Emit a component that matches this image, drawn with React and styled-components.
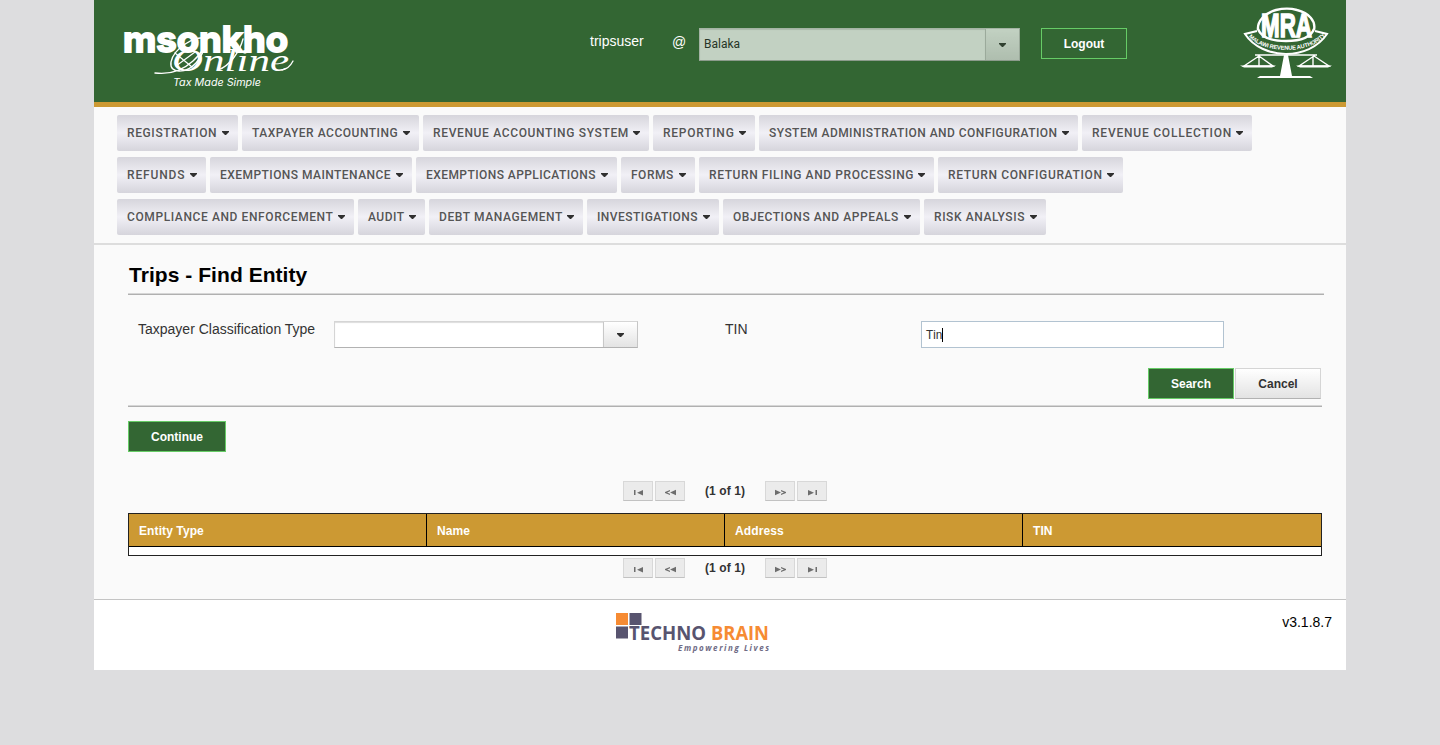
import React from "react";
import styled, { createGlobalStyle } from "styled-components";

const GlobalStyle = createGlobalStyle`
  * { box-sizing: border-box; }
  body { margin: 0; background: #dddddf; color: #000; font-family: "Liberation Sans", Arial, sans-serif; }
`;

const Page = styled.div`
  width: 1252px;
  height: 670px;
  margin: 0 auto;
  display: flex;
  flex-direction: column;
  background: #fafafa;
`;

const Header = styled.header`
  height: 107px;
  flex: none;
  display: flex;
  align-items: flex-start;
  background: #336633;
  border-bottom: 5px solid #cc9933;
  color: #fff;
  font-size: 14px;
`;

const BrandLogo = styled.svg`
  display: block;
  width: 180px;
  height: 72px;
  margin: 20px 0 0 26px;
`;

const UserName = styled.span`
  width: 82px;
  margin: 33px 0 0 290px;
  line-height: 16px;
`;

const At = styled.span`
  width: 27px;
  margin-top: 34px;
  line-height: 16px;
`;

const Select = styled.div`
  width: ${(p) => p.$width}px;
  height: ${(p) => p.$height}px;
  display: flex;
  border: 1px solid #d5d5d5;
  border-bottom-color: #b2b2b2;
  border-right-color: #c6c6c6;
  background: #fff;
  color: #222;
  font: 12px Roboto, sans-serif;
  opacity: ${(p) => (p.$disabled ? 0.7 : 1)};
`;

const SelectValue = styled.div`
  flex: 1;
  display: flex;
  align-items: center;
  padding: 0 0 2px 4px;
  box-shadow: inset 0 1px 1px #ddd;
`;

const SelectTrigger = styled.div`
  width: 34px;
  display: flex;
  align-items: center;
  justify-content: center;
  border-left: 1px solid #c8c8c8;
  background: linear-gradient(#fff, #e3e3e3);
`;

const CaretIcon = styled.svg`
  display: block;
  flex: none;
  width: 7px;
  height: 4px;
  fill: #303030;
`;

const Button = styled.button`
  width: ${(p) => p.$width || 86}px;
  height: 31px;
  padding: 0;
  border: 1px solid ${(p) => (p.$primary ? "#66cc66" : "#d5d5d5")};
  border-bottom-color: ${(p) => (p.$primary ? "#66cc66" : "#b2b2b2")};
  background: ${(p) => (p.$primary ? "#336633" : "linear-gradient(#fff, #e3e3e3)")};
  color: ${(p) => (p.$primary ? "#fff" : "#333")};
  font: bold 12px "Liberation Sans", Arial, sans-serif;
`;

const LogoutSlot = styled.div`
  margin: 28px 0 0 21px;
`;

const OfficeSlot = styled.div`
  margin-top: 28px;
`;

const AuthorityLogo = styled.svg`
  display: block;
  width: 94px;
  height: 76px;
  margin: 5px 13px 0 auto;
`;

const Nav = styled.nav`
  height: 138px;
  flex: none;
  display: flex;
  flex-direction: column;
  gap: 6px;
  padding: 8px 0 0 23px;
  border-bottom: 2px solid #dddddd;
`;

const NavRow = styled.div`
  display: flex;
  gap: 4px;
`;

const NavItem = styled.div`
  width: ${(p) => p.$width}px;
  height: 36px;
  display: flex;
  align-items: center;
  justify-content: space-between;
  padding: 0 9px 0 10px;
  border-radius: 2px;
  background: linear-gradient(#d6d5dc, #f1f0f6 50%, #d6d5dc);
  color: #555;
  font: 500 12px Roboto, sans-serif;
  letter-spacing: ${(p) => p.$tracking}px;
  white-space: nowrap;
`;

const Content = styled.main`
  height: 354px;
  flex: none;
  padding: 0 24px 0 34px;
`;

const Title = styled.h1`
  width: 1196px;
  height: 50px;
  margin: 0;
  padding: 17px 0 0 1px;
  border-bottom: 1px solid #b0b0b0;
  box-shadow: inset 0 -1px #d6d6d6;
  font-size: 21px;
  line-height: 26px;
  letter-spacing: 0.05px;
`;

const Form = styled.div`
  display: flex;
  height: 27px;
  margin-top: 26px;
  padding-left: 10px;
  color: #333;
  font-size: 14px;
`;

const Label = styled.label`
  width: 196px;
  line-height: 17px;
  margin-left: ${(p) => p.$offset || 0}px;
`;

const TextInput = styled.div`
  width: 303px;
  height: 27px;
  display: flex;
  align-items: center;
  padding-left: 4px;
  border: 1px solid #b2c3d1;
  background: #fff;
  font: 12px Roboto, sans-serif;
  letter-spacing: -0.2px;
`;

const TextCursor = styled.i`
  width: 1px;
  height: 14px;
  background: #000;
`;

const Actions = styled.div`
  width: 1194px;
  height: 59px;
  display: flex;
  justify-content: flex-end;
  gap: 1px;
  padding: 20px 1px 0 0;
  border-bottom: 1px solid #b0b0b0;
  box-shadow: inset 0 -1px #d6d6d6;
`;

const ContinueRow = styled.div`
  height: 74px;
  padding-top: 14px;
`;

const Paginator = styled.div`
  width: 204px;
  height: 20px;
  display: flex;
  gap: 2px;
  margin-left: 495px;
`;

const PageButton = styled.div`
  width: 30px;
  height: 20px;
  display: flex;
  align-items: center;
  justify-content: center;
  padding-top: 3px;
  border: 1px solid #d8d8d8;
  border-bottom-color: #c2c2c2;
  background: #ebebeb;
`;

const PageIcon = styled.svg`
  display: block;
  width: 11px;
  height: 7px;
  fill: #6d6d6d;
  stroke: none;
`;

const PageStatus = styled.span`
  width: 76px;
  text-align: center;
  color: #333;
  font-size: 12px;
  font-weight: bold;
  line-height: 20px;
  letter-spacing: 0.1px;
`;

const Table = styled.div`
  width: 1194px;
  height: 43px;
  margin: 12px 0 2px;
  border: 1px solid #222;
  background: #fff;
`;

const TableHead = styled.div`
  height: 33px;
  display: grid;
  grid-template-columns: 298px 298px 298px 298px;
  grid-template-rows: 32px;
  background: #cc9933;
  border-bottom: 1px solid #000;
`;

const HeadCell = styled.div`
  padding-left: 10px;
  border-right: ${(p) => (p.$last ? "none" : "1px solid #000")};
  color: #fff;
  font-size: 12px;
  font-weight: bold;
  line-height: 34px;
  letter-spacing: 0.1px;
`;

const Footer = styled.footer`
  height: 71px;
  flex: none;
  display: flex;
  justify-content: space-between;
  padding: 13px 14px 0 521px;
  border-top: 1px solid #c4c4c4;
  background: #fff;
`;

const VendorLogo = styled.svg`
  display: block;
  width: 156px;
  height: 44px;
`;

const Version = styled.span`
  font-size: 14px;
  line-height: 18px;
`;

const menus = [
  [["REGISTRATION", 121, 0.62], ["TAXPAYER ACCOUNTING", 177, 0.52], ["REVENUE ACCOUNTING SYSTEM", 226, 0.65], ["REPORTING", 102, 0.75], ["SYSTEM ADMINISTRATION AND CONFIGURATION", 319, 0.45], ["REVENUE COLLECTION", 170, 0.78]],
  [["REFUNDS", 89, 0.85], ["EXEMPTIONS MAINTENANCE", 202, 0.45], ["EXEMPTIONS APPLICATIONS", 201, 0.43], ["FORMS", 74, 0.5], ["RETURN FILING AND PROCESSING", 235, 0.6], ["RETURN CONFIGURATION", 185, 0.65]],
  [["COMPLIANCE AND ENFORCEMENT", 237, 0.6], ["AUDIT", 67, 0.5], ["DEBT MANAGEMENT", 154, 0.6], ["INVESTIGATIONS", 132, 0.46], ["OBJECTIONS AND APPEALS", 197, 0.55], ["RISK ANALYSIS", 122, 0.58]],
];

const columns = ["Entity Type", "Name", "Address", "TIN"];

const pageIcons = {
  first: "M1 1h1.500v5H1z M10 1v5.500L4 3.700z",
  prev: "M5 1v1.300L2 3.500 5 4.700V6L0 4V3z M11 .7v5.600L5 3.500z",
  next: "M0 .7v5.600l6-2.800z M6 1v1.300l3 1.200-3 1.200V6l5-2V3z",
  last: "M1 1v5.500l6-2.800z M8.500 1H10v5H8.500z",
};

function Caret() {
  return (
    <CaretIcon viewBox="0 0 7 4"><path d="M0 0h7v1L4 4H3L0 1z" /></CaretIcon>
  );
}

function PageLink({ kind }) {
  return (
    <PageButton><PageIcon viewBox="0 0 11 7"><path d={pageIcons[kind]} /></PageIcon></PageButton>
  );
}

function Pager() {
  return (
    <Paginator>
      <PageLink kind="first" />
      <PageLink kind="prev" />
      <PageStatus>(1 of 1)</PageStatus>
      <PageLink kind="next" />
      <PageLink kind="last" />
    </Paginator>
  );
}

function Brand() {
  return (
    <BrandLogo viewBox="120 20 180 72" fill="#fff">
      <text x="123" y="51.5" fontFamily="Inter, sans-serif" fontWeight="700" fontSize="35" textLength="165" lengthAdjust="spacingAndGlyphs" stroke="#fff" strokeWidth="1.8">msonkho</text>
      <text x="172" y="71" fontFamily="Liberation Serif, serif" fontStyle="italic" fontSize="31" textLength="117" lengthAdjust="spacingAndGlyphs">Online</text>
      <g fill="none" stroke="#fff" strokeLinecap="round">
        <path d="M155 73c16 2 28-3 38-12 9-8 16-19 11-22-7-5-31 10-33 23-2 12 15 12 25 1 7-8 10-17 6-22" strokeWidth="1.4" />
        <path d="M175 53l17 14M176 66l19-14" strokeWidth="1.2" />
        <path d="M218 70c12-4 22-19 25-31 M282 70c5-1 9-5 11-9" strokeWidth="1.3" />
      </g>
      <text x="173" y="86" fontFamily="Inter, sans-serif" fontStyle="italic" fontSize="10.5" textLength="88" lengthAdjust="spacingAndGlyphs">Tax Made Simple</text>
    </BrandLogo>
  );
}

function Authority() {
  return (
    <AuthorityLogo viewBox="1239 5 94 76" fill="#fff">
      <defs>
        <path id="motto" d="M1248 36c14 18 61 19 77 0" />
      </defs>
      <text x="1261" y="36.5" fontFamily="Liberation Sans, sans-serif" fontWeight="bold" fontSize="34" textLength="51" lengthAdjust="spacingAndGlyphs" stroke="#fff" strokeWidth="1.6">MRA</text>
      <g fill="none" stroke="#fff">
        <path d="M1258 30c-1-9 7-17 18-20 8-2 14-2 21 0 12 3 19 11 17 20" strokeWidth="2.4" />
        <path d="M1258 29c3 8 13 12 28 12s25-4 28-12" strokeWidth="2.4" />
        <path d="M1257 31l-12 3c17 26 64 27 82 0l-12-3" strokeWidth="2" />
        <path d="M1255 55h62M1259 56l-15 10h29zM1259 56v10M1314 56l-15 10h30zM1313 56v10" strokeWidth="1.4" />
      </g>
      <text fontFamily="Liberation Sans, sans-serif" fontWeight="bold" fontSize="5.8"><textPath href="#motto" startOffset="1" textLength="84">MALAWI REVENUE AUTHORITY</textPath></text>
      <path d="M1284 55h4l4 21h18l3 2h-56l3-2h20z M1240 65.500h36l-4 2h-28z M1296 65.500h36l-4 2h-28z" />
    </AuthorityLogo>
  );
}

export default function App() {
  return (
    <>
      <GlobalStyle />
      <Page>
        <Header>
          <Brand />
          <UserName>tripsuser</UserName>
          <At>@</At>
          <OfficeSlot>
            <Select $width={321} $height={33} $disabled>
              <SelectValue>Balaka</SelectValue>
              <SelectTrigger><Caret /></SelectTrigger>
            </Select>
          </OfficeSlot>
          <LogoutSlot><Button $primary>Logout</Button></LogoutSlot>
          <Authority />
        </Header>
        <Nav>
          {menus.map((row, i) => (
            <NavRow key={i}>
              {row.map(([name, width, tracking]) => (
                <NavItem key={name} $width={width} $tracking={tracking}>{name}<Caret /></NavItem>
              ))}
            </NavRow>
          ))}
        </Nav>
        <Content>
          <Title>Trips - Find Entity</Title>
          <Form>
            <Label>Taxpayer Classification Type</Label>
            <Select $width={304} $height={27}>
              <SelectValue />
              <SelectTrigger><Caret /></SelectTrigger>
            </Select>
            <Label $offset={87}>TIN</Label>
            <TextInput>Tin<TextCursor /></TextInput>
          </Form>
          <Actions>
            <Button $primary>Search</Button>
            <Button>Cancel</Button>
          </Actions>
          <ContinueRow><Button $primary $width={98}>Continue</Button></ContinueRow>
          <Pager />
          <Table>
            <TableHead>
              {columns.map((c, i) => <HeadCell key={c} $last={i === 3}>{c}</HeadCell>)}
            </TableHead>
          </Table>
          <Pager />
        </Content>
        <Footer>
          <VendorLogo viewBox="615 613 156 44">
            <path fill="#f68b33" d="M616 613h12v12h-12z" />
            <path fill="#58546f" d="M629.500 613h12v12h-12zM616 626.500h12v12h-12z" />
            <g fontFamily="Open Sans, sans-serif" fontWeight="bold">
              <text x="629" y="640" fontSize="19" fill="#58546f" textLength="77" lengthAdjust="spacingAndGlyphs">TECHNO</text>
              <text x="711" y="640" fontSize="19" fill="#f68b33" textLength="58" lengthAdjust="spacingAndGlyphs">BRAIN</text>
              <text x="678" y="651" fontSize="8" fontStyle="italic" fill="#6f6b85" textLength="91">Empowering Lives</text>
            </g>
          </VendorLogo>
          <Version>v3.1.8.7</Version>
        </Footer>
      </Page>
    </>
  );
}
